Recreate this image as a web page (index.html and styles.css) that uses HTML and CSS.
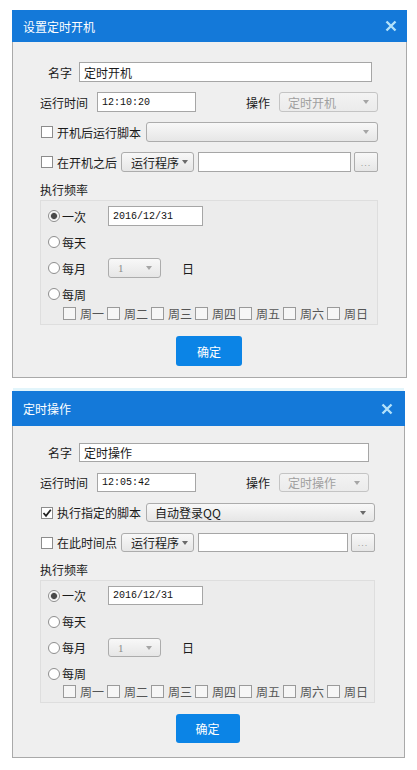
FILE: index.html
```html
<!DOCTYPE html>
<html lang="zh">

<head>
    <title>定时开机</title>
    <meta charset="UTF-8">
    <link rel="stylesheet" href="styles.css">
</head>

<body>
    <div class="page">
        <div class="dialog dialog-boot">
            <div class="dialog-title">
                <span>设置定时开机</span>
                <svg class="close" width="12" height="12" viewBox="0 0 12 12"><path d="M1.5 1.5L10.5 10.5M10.5 1.5L1.5 10.5"/></svg>
            </div>
            <div class="dialog-body">
                <div class="row row-name"><span class="lbl">名字</span><span class="input grow">定时开机</span></div>
                <div class="row"><span class="lbl">运行时间</span><span class="input time mono">12:10:20</span><span class="lbl op-lbl">操作</span><span class="select op disabled">定时开机<i class="caret"></i></span></div>
                <div class="row"><span class="check"></span><span class="lbl chk-lbl">开机后运行脚本</span><span class="select grow"><i class="caret"></i></span></div>
                <div class="row"><span class="check"></span><span class="lbl chk-lbl">在开机之后</span><span class="btn-drop">运行程序<i class="caret dark"></i></span><span class="input grow path"></span><span class="btn-dots">...</span></div>
                <div class="freq-label">执行频率</div>
                <div class="freq">
                    <div class="frow"><span class="radio on"></span><span class="rlbl">一次</span><span class="input date mono">2016/12/31</span></div>
                    <div class="frow"><span class="radio"></span><span class="rlbl">每天</span></div>
                    <div class="frow"><span class="radio"></span><span class="rlbl">每月</span><span class="select day">1<i class="caret"></i></span><span class="unit">日</span></div>
                    <div class="frow"><span class="radio"></span><span class="rlbl">每周</span></div>
                    <div class="days">
                        <span class="day-item"><span class="check"></span>周一</span>
                        <span class="day-item"><span class="check"></span>周二</span>
                        <span class="day-item"><span class="check"></span>周三</span>
                        <span class="day-item"><span class="check"></span>周四</span>
                        <span class="day-item"><span class="check"></span>周五</span>
                        <span class="day-item"><span class="check"></span>周六</span>
                        <span class="day-item"><span class="check"></span>周日</span>
                    </div>
                </div>
                <div class="actions"><span class="btn-ok">确定</span></div>
            </div>
        </div>

        <div class="dialog dialog-op">
            <div class="dialog-title">
                <span>定时操作</span>
                <svg class="close" width="12" height="12" viewBox="0 0 12 12"><path d="M1.5 1.5L10.5 10.5M10.5 1.5L1.5 10.5"/></svg>
            </div>
            <div class="dialog-body">
                <div class="row row-name"><span class="lbl">名字</span><span class="input grow">定时操作</span></div>
                <div class="row"><span class="lbl">运行时间</span><span class="input time mono">12:05:42</span><span class="lbl op-lbl">操作</span><span class="select op disabled">定时操作<i class="caret"></i></span></div>
                <div class="row"><span class="check on"><svg width="10" height="10" viewBox="0 0 10 10"><path d="M1.5 5L4 7.8L8.8 1.8"/></svg></span><span class="lbl chk-lbl">执行指定的脚本</span><span class="select grow">自动登录QQ<i class="caret dark"></i></span></div>
                <div class="row"><span class="check"></span><span class="lbl chk-lbl">在此时间点</span><span class="btn-drop">运行程序<i class="caret dark"></i></span><span class="input grow path"></span><span class="btn-dots">...</span></div>
                <div class="freq-label">执行频率</div>
                <div class="freq">
                    <div class="frow"><span class="radio on"></span><span class="rlbl">一次</span><span class="input date mono">2016/12/31</span></div>
                    <div class="frow"><span class="radio"></span><span class="rlbl">每天</span></div>
                    <div class="frow"><span class="radio"></span><span class="rlbl">每月</span><span class="select day">1<i class="caret"></i></span><span class="unit">日</span></div>
                    <div class="frow"><span class="radio"></span><span class="rlbl">每周</span></div>
                    <div class="days">
                        <span class="day-item"><span class="check"></span>周一</span>
                        <span class="day-item"><span class="check"></span>周二</span>
                        <span class="day-item"><span class="check"></span>周三</span>
                        <span class="day-item"><span class="check"></span>周四</span>
                        <span class="day-item"><span class="check"></span>周五</span>
                        <span class="day-item"><span class="check"></span>周六</span>
                        <span class="day-item"><span class="check"></span>周日</span>
                    </div>
                </div>
                <div class="actions"><span class="btn-ok">确定</span></div>
            </div>
        </div>
    </div>
</body>

</html>
```

FILE: styles.css
```css
body {
    margin: 0;
    background: #fff;
    color: #1a1a1a;
    font-family: "Noto Sans CJK SC", "Liberation Sans", sans-serif;
    font-size: 12px;
}

.page {
    display: flex;
    flex-direction: column;
    gap: 13px;
    padding-top: 10px;
}

/* sizes that differ between the two dialogs */
.dialog-boot {
    --w: 395px; --title-h: 32px; --pad-top: 20px; --pad-bottom: 11px;
    --row-h: 20px; --row-gap: 10px; --op-w: 99px; --pad-right: 28px;
    --f-row-h: 20px; --f-gap: 6px; --days-h: 18px; --ok-w: 66px; --ok-h: 30px;
    --close-right: 10px;
}

.dialog-op {
    --w: 393px; --title-h: 35px; --pad-top: 17px; --pad-bottom: 14px;
    --row-h: 19px; --row-gap: 11px; --op-w: 90px; --pad-right: 29px;
    --f-row-h: 19px; --f-gap: 7px; --days-h: 17px; --ok-w: 64px; --ok-h: 29px;
    --close-right: 12px;
}

.dialog {
    width: var(--w);
    margin-left: 12px;
}

.dialog-op .dialog-title {
    box-shadow: 0 -4px 0 -1px #e2f5fb;
}

.dialog-title {
    height: var(--title-h);
    background: #1479d9;
    color: #fff;
    display: flex;
    align-items: center;
    justify-content: space-between;
    padding: 0 var(--close-right) 0 11px;
}

.close path {
    stroke: #b3e2fa;
    stroke-width: 2.4;
    fill: none;
}

.dialog-body {
    background: #efefef;
    border: 1px solid #a9a9a9;
    border-top: 0;
    padding: var(--pad-top) var(--pad-right) var(--pad-bottom) 27px;
    display: flex;
    flex-direction: column;
}

.row {
    height: var(--row-h);
    display: flex;
    align-items: center;
    margin-bottom: var(--row-gap);
}

.row:nth-child(4) {
    margin-bottom: 10px;
}

.row-name {
    padding-left: 8px;
    padding-right: 6px;
}

.lbl {
    white-space: nowrap;
    margin-right: 9px;
}

.row-name .lbl {
    margin-right: 7px;
}

.chk-lbl {
    margin-right: 4px;
}

.row:nth-child(3) .chk-lbl {
    margin-right: 5px;
}

.op-lbl {
    margin-left: 50px;
}

.grow {
    flex: 1;
}

.mono {
    font-family: "Liberation Mono", "DejaVu Sans Mono", monospace;
    font-size: 10px;
    color: #111;
}

.input {
    box-sizing: border-box;
    height: 100%;
    background: #fff;
    border: 1px solid #a6a6a6;
    display: flex;
    align-items: center;
    padding-left: 4px;
}

.time {
    width: 99px;
}

.path {
    margin: 0 3px 0 4px;
}

.select,
.btn-drop,
.btn-dots {
    box-sizing: border-box;
    height: 100%;
    background: linear-gradient(#f8f8f8, #e6e6e6);
    border: 1px solid #acacac;
    border-radius: 3px;
    display: flex;
    align-items: center;
    position: relative;
}

.select {
    padding-left: 8px;
}

.op {
    width: var(--op-w);
}

.disabled {
    color: #a0a0a0;
    background: linear-gradient(#f3f3f3, #ebebeb);
    border-color: #c4c4c4;
}

.caret {
    position: absolute;
    right: 8px;
    top: 50%;
    margin-top: -2px;
    width: 0;
    height: 0;
    border-left: 3.5px solid transparent;
    border-right: 3.5px solid transparent;
    border-top: 4px solid #a5a5a5;
}

.caret.dark {
    border-top-color: #6a6a6a;
}

.btn-drop {
    width: 73px;
    padding-left: 9px;
}

.btn-drop .caret {
    right: 5px;
}

.btn-dots {
    width: 24px;
    justify-content: center;
    align-items: flex-end;
    padding-bottom: 3px;
    color: #9a9a9a;
    font-family: "Liberation Sans", sans-serif;
    font-size: 9px;
    letter-spacing: 1px;
    border-radius: 2px;
}

.check {
    box-sizing: border-box;
    width: 12px;
    height: 12px;
    margin: 0 4px 0 1px;
    background: #fff;
    border: 1px solid #8c8c8c;
    display: inline-flex;
    align-items: center;
    justify-content: center;
    flex: none;
}

.check.on path {
    stroke: #222;
    stroke-width: 1.8;
    fill: none;
}

.freq-label {
    height: 16px;
    line-height: 16px;
    margin-bottom: 2px;
}

.freq {
    border: 1px solid #dedede;
    background: #ececec;
    padding: 5px 0 2px 7px;
    display: flex;
    flex-direction: column;
    gap: var(--f-gap);
}

.frow {
    height: var(--f-row-h);
    display: flex;
    align-items: center;
}

.radio {
    box-sizing: border-box;
    width: 12px;
    height: 12px;
    border-radius: 50%;
    border: 1px solid #8e8e8e;
    background: #fff;
    margin-right: 2px;
    flex: none;
}

.radio.on {
    background: radial-gradient(circle, #4a4a4a 0, #4a4a4a 2.6px, #d8d8d8 3.4px, #fff 4.2px);
}

.rlbl {
    width: 46px;
}

.date {
    width: 95px;
}

.day {
    width: 53px;
    color: #8a8a8a;
    font-family: "Liberation Serif", serif;
    font-size: 11px;
    padding-left: 9px;
}

.unit {
    margin-left: 21px;
}

.days {
    height: var(--days-h);
    display: flex;
    align-items: center;
    padding-left: 15px;
    margin-top: calc(0px - var(--f-gap));
    color: #555;
}

.day-item {
    display: flex;
    align-items: center;
    width: 44px;
}

.days .check {
    width: 13px;
    height: 13px;
    border-color: #9a9a9a;
    background: #f6f6f6;
    margin: 0 4px 0 0;
}

.actions {
    display: flex;
    justify-content: center;
    margin-top: 11px;
}

.btn-ok {
    width: var(--ok-w);
    height: var(--ok-h);
    border-radius: 3px;
    background: #0b84e6;
    color: #fff;
    display: flex;
    align-items: center;
    justify-content: center;
}
```
